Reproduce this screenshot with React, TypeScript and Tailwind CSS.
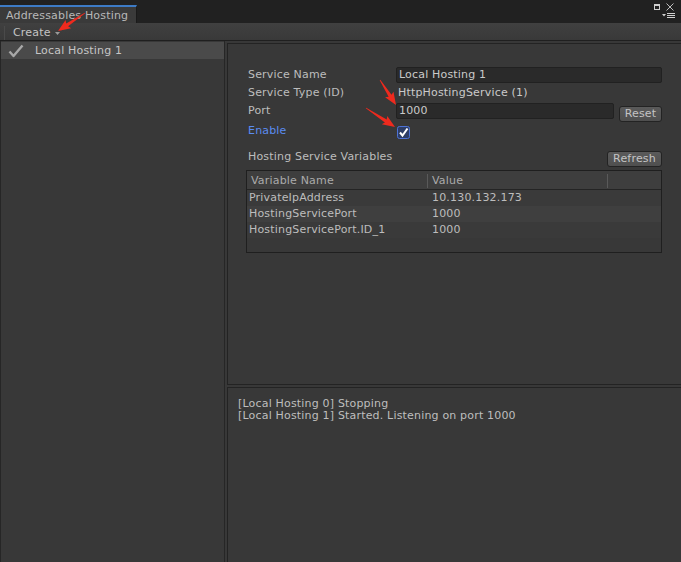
import React from "react";

type Pt = { x1: number; y1: number; x2: number; y2: number };

function arrowPoints({ x1, y1, x2, y2 }: Pt) {
  const dx = x2 - x1;
  const dy = y2 - y1;
  const L = Math.hypot(dx, dy);
  const ux = dx / L;
  const uy = dy / L;
  const nx = -uy;
  const ny = ux;
  const H = 11;
  const W = 5;
  const w = 1.7;
  const bx = x2 - ux * H;
  const by = y2 - uy * H;
  const pts = [
    [x1 + nx * 0.4, y1 + ny * 0.4],
    [bx + nx * w, by + ny * w],
    [bx + nx * W - ux * 1.5, by + ny * W - uy * 1.5],
    [x2, y2],
    [bx - nx * W - ux * 1.5, by - ny * W - uy * 1.5],
    [bx - nx * w, by - ny * w],
    [x1 - nx * 0.4, y1 - ny * 0.4],
  ];
  return pts.map((p) => `${p[0].toFixed(1)},${p[1].toFixed(1)}`).join(" ");
}

function Field({ value, className }: { value: string; className: string }) {
  return (
    <div
      className={`h-[16px] bg-[#2a2a2a] border border-[#212121] rounded-[2px] pl-[2px] flex items-center text-[#cacaca] ${className}`}
    >
      {value}
    </div>
  );
}

function Btn({ label, className }: { label: string; className: string }) {
  return (
    <div
      className={`h-[16px] rounded-[3px] border border-[#232323] bg-gradient-to-b from-[#5a5a5a] to-[#4f4f4f] text-[#c4c4c4] flex items-center justify-center ${className}`}
    >
      {label}
    </div>
  );
}

export default function App() {
  const rows = [
    ["PrivateIpAddress", "10.130.132.173", "bg-[#3a3a3a]"],
    ["HostingServicePort", "1000", "bg-[#3f3f3f]"],
    ["HostingServicePort.ID_1", "1000", "bg-[#3a3a3a]"],
  ];
  return (
    <div className="relative w-[681px] h-[562px] overflow-hidden bg-[#383838] text-[11px] leading-[14px] tracking-[0.18px] text-[#bdbdbd] [font-family:'DejaVu_Sans',sans-serif] flex flex-col">
      {/* Tab strip */}
      <div className="h-[23px] bg-[#212121] flex items-end relative">
        <div className="w-[137px] h-[18px] bg-[#3a3a3a] border-t-2 border-[#3d7bc6] border-r border-r-[#1a1a1a] flex items-center pl-[6px] pt-[2px] text-[#b8b8b8]">
          Addressables Hosting
        </div>
        <div className="absolute right-[7px] top-[3px] flex items-start gap-[6px]">
          <div className="w-[6px] h-[6px] border border-[#cfcfcf] border-t-2 mt-[1px]" />
          <svg width="8" height="8" viewBox="0 0 8 8">
            <path d="M0.5 0.5 L7.5 7.5 M7.5 0.5 L0.5 7.5" stroke="#bdbdbd" strokeWidth="1" />
          </svg>
        </div>
        <div className="absolute right-[5px] top-[13px]">
          <svg width="14" height="6" viewBox="0 0 14 6">
            <path d="M0 1 L4 1 L2 3.5 Z" fill="#d0d0d0" />
            <rect x="5" y="0" width="8" height="1" fill="#d0d0d0" />
            <rect x="5" y="2" width="8" height="1" fill="#d0d0d0" />
            <rect x="5" y="4" width="8" height="1" fill="#d0d0d0" />
          </svg>
        </div>
      </div>
      {/* Toolbar */}
      <div className="h-[18px] bg-gradient-to-b from-[#404040] to-[#393939] border-b border-[#1f1f1f] flex items-center pt-[2px]">
        <div className="w-[1px] h-[14px] bg-[#4a4a4a] ml-[4px]" />
        <div className="ml-[8px] flex items-center text-[#c4c4c4]">
          Create
          <svg width="5" height="4" viewBox="0 0 5 4" className="ml-[4px] mt-[2px]">
            <path d="M0 0 L5 0 L2.5 3 Z" fill="#9a9a9a" />
          </svg>
        </div>
      </div>
      {/* Body */}
      <div className="flex-1 flex min-h-0">
        {/* Left list */}
        <div className="w-[225px] border-l border-r border-[#262626] bg-[#383838] pt-[1px]">
          <div className="h-[17px] bg-[#4a4a4a] flex items-center">
            <svg width="16" height="14" viewBox="0 0 16 14" className="ml-[7px]">
              <path d="M1.5 7.5 L5.5 12 L14.5 1.5" stroke="#a8a8a8" strokeWidth="2.4" fill="none" strokeLinejoin="round" />
            </svg>
            <span className="ml-[11px] text-[#c6c6c6]">Local Hosting 1</span>
          </div>
        </div>
        {/* Right */}
        <div className="flex-1 flex flex-col pl-[2px] pt-[2px]">
          <div className="h-[342px] border border-[#232323] border-r-0 bg-[#383838] pl-[20px] pr-[19px] pt-[22px]">
            <div className="flex flex-col">
              <div className="h-[18px] flex items-center">
                <div className="w-[148px]">Service Name</div>
                <Field value="Local Hosting 1" className="flex-1" />
              </div>
              <div className="h-[18px] flex items-center">
                <div className="w-[148px]">Service Type (ID)</div>
                <div className="pl-[2px] text-[#cacaca]">HttpHostingService (1)</div>
              </div>
              <div className="h-[18px] flex items-center">
                <div className="w-[148px]">Port</div>
                <Field value="1000" className="w-[218px]" />
                <Btn label="Reset" className="ml-[5px] w-[43px] mt-[5px]" />
              </div>
              <div className="h-[20px] mt-[1px] flex items-center">
                <div className="w-[149px] text-[#5b8cf1]">Enable</div>
                <svg width="13" height="13" viewBox="0 0 13 13" className="mt-[2px]">
                  <rect x="0.5" y="0.5" width="12" height="12" rx="2" fill="#2d3d66" stroke="#4d72d6" />
                  <path d="M3 6.5 L5.5 9.5 L10.5 2.5" stroke="#ffffff" strokeWidth="2" fill="none" />
                </svg>
              </div>
              <div className="h-[18px] mt-[7px] flex items-center justify-between">
                <div>Hosting Service Variables</div>
                <Btn label="Refresh" className="w-[55px] mt-[3px]" />
              </div>
              <div className="mt-[4px] -ml-[2px] h-[83px] border border-[#1f1f1f] bg-[#383838] flex flex-col">
                <div className="h-[19px] bg-[#3e3e3e] border-b border-[#242424] flex items-center text-[#aaaaaa] pt-[1px]">
                  <div className="w-[180px] pl-[4px]">Variable Name</div>
                  <div className="w-[1px] h-[14px] bg-[#5a5a5a]" />
                  <div className="w-[179px] pl-[4px]">Value</div>
                  <div className="w-[1px] h-[14px] bg-[#5a5a5a]" />
                </div>
                {rows.map(([a, b, bg]) => (
                  <div key={a} className={`h-[16px] flex items-center ${bg}`}>
                    <div className="w-[181px] pl-[2px]">{a}</div>
                    <div className="pl-[4px]">{b}</div>
                  </div>
                ))}
              </div>
            </div>
          </div>
          <div className="h-[2px] bg-[#383838]" />
          <div className="flex-1 border-t border-l border-[#232323] bg-[#383838] pl-[10px] pt-[10px] leading-[12px] text-[#bebebe]">
            <div>[Local Hosting 0] Stopping</div>
            <div>[Local Hosting 1] Started. Listening on port 1000</div>
          </div>
        </div>
      </div>
      {/* Annotation arrows */}
      <svg className="absolute left-0 top-0 pointer-events-none" width="681" height="562">
        <polygon points={arrowPoints({ x1: 85, y1: 13, x2: 58, y2: 31 })} fill="#ee2a1e" />
        <polygon points={arrowPoints({ x1: 380, y1: 80, x2: 396, y2: 105 })} fill="#ee2a1e" />
        <polygon points={arrowPoints({ x1: 366, y1: 108, x2: 395, y2: 127 })} fill="#ee2a1e" />
      </svg>
    </div>
  );
}
